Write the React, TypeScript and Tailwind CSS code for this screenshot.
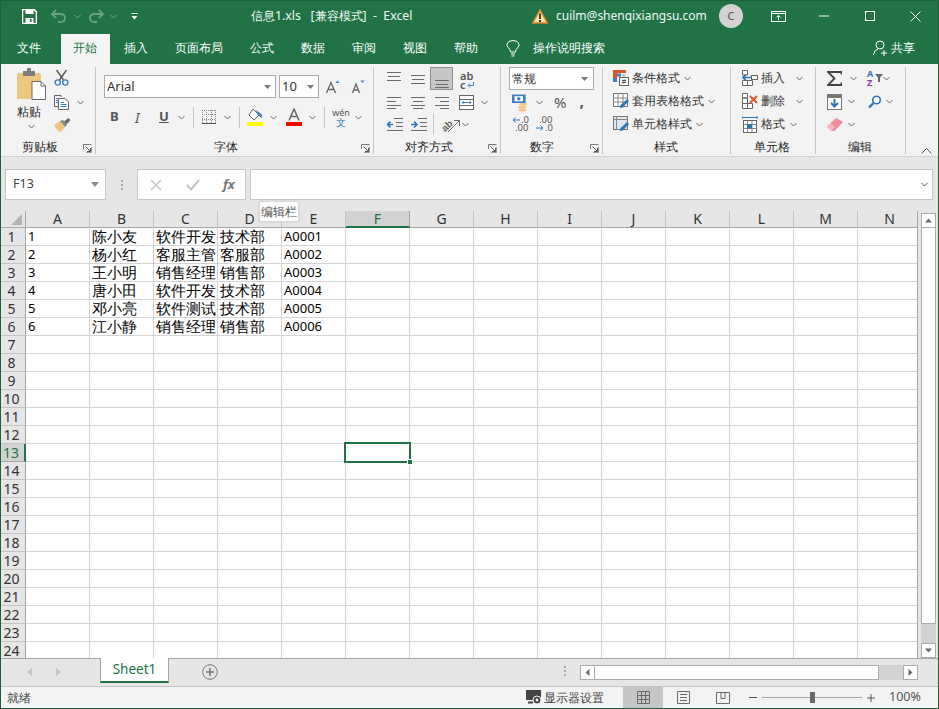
import React from "react";

const UI = "font-['Noto_Sans','Noto_Sans_CJK_SC',sans-serif]";

function Chev({ c = "#6a6a6a", cls = "" }: { c?: string; cls?: string }) {
  return (
    <svg width="7" height="5" viewBox="0 0 7 5" className={`shrink-0 ${cls}`}>
      <path d="M0.5 1 L3.5 4 L6.5 1" fill="none" stroke={c} strokeWidth="1" />
    </svg>
  );
}
function Lines({ w = 14, ys, xs }: { w?: number; ys: number[]; xs?: [number, number][] }) {
  return (
    <svg width={w} height="16" viewBox={`0 0 ${w} 16`}>
      {ys.map((y, i) => (
        <path key={i} d={`M${xs ? xs[i][0] : 0} ${y}.5 H${xs ? xs[i][1] : w}`} stroke="#6b6b6b" />
      ))}
    </svg>
  );
}
function Launcher() {
  return (
    <svg width="9" height="9" viewBox="0 0 9 9">
      <path d="M0.5 5 V0.5 H8.5" fill="none" stroke="#7a7a7a" />
      <path d="M2.5 2.5 L7.5 7.5 M4 7.5 H7.5 V4" fill="none" stroke="#555" />
      <path d="M8.5 3 V8.5 H3" fill="none" stroke="#999" />
    </svg>
  );
}
function Group({ w, label, children, launcher, lx }: { w: string; label: string; children: React.ReactNode; launcher?: boolean; lx?: string }) {
  return (
    <div className={`${w} shrink-0 h-[87px] mt-[3px] border-r border-[#c6c6c6] flex flex-col relative`}>
      <div className="flex-1 min-h-0">{children}</div>
      <div className={`h-[15px] text-[12px] leading-[15px] text-center text-[#262626] ${lx ?? ""}`}>{label}</div>
      {launcher && (
        <div className="absolute right-[2px] bottom-0 h-[10px] w-[10px]">
          <Launcher />
        </div>
      )}
    </div>
  );
}
function Sep({ h = "h-[21px]" }: { h?: string }) {
  return <div className={`w-px ${h} bg-[#c6c6c6] shrink-0`} />;
}

const Paste = () => (
  <svg width="29" height="36" viewBox="0 0 29 36">
    <rect x="0" y="5" width="24" height="26" rx="1.5" fill="#efc67f" />
    <rect x="6" y="3" width="12" height="5" fill="#7d7d7d" />
    <rect x="10" y="0" width="4" height="4" fill="#7d7d7d" />
    <path d="M15 13.5 H24 L28.5 18 V31.5 H15 Z" fill="#fff" stroke="#6a6a6a" />
    <path d="M24 13.5 V18 H28.5" fill="none" stroke="#6a6a6a" />
  </svg>
);
const Scissors = () => (
  <svg width="15" height="16" viewBox="0 0 15 16">
    <path d="M2.5 0 L9.5 10 M12.5 0 L5.5 10" stroke="#555" strokeWidth="1.4" fill="none" />
    <circle cx="3.7" cy="12.5" r="2.6" fill="none" stroke="#3f7fc1" strokeWidth="1.4" />
    <circle cx="11.3" cy="12.5" r="2.6" fill="none" stroke="#3f7fc1" strokeWidth="1.4" />
  </svg>
);
const Copy = () => (
  <svg width="16" height="15" viewBox="0 0 16 15">
    <path d="M0.5 0.5 H7 V2 M0.5 0.5 V11.5 H4" fill="none" stroke="#666" />
    <path d="M4.5 3.5 H11 L14.5 7 V14.5 H4.5 Z" fill="#fff" stroke="#666" />
    <path d="M6.5 7.5 H10 M6.5 9.5 H12.5 M6.5 11.5 H12.5" stroke="#3f7fc1" />
    <path d="M2 3.5 H4 M2 5.5 H4 M2 7.5 H4" stroke="#3f7fc1" />
  </svg>
);
const Brush = () => (
  <svg width="17" height="15" viewBox="0 0 17 15">
    <path d="M0 7 L6 3 L11 9 L7 14 Q3 13 0 7Z" fill="#efc67f" />
    <path d="M6 3 L11 9 L13 7 L9 2Z" fill="#8a8a8a" />
    <path d="M10 3.5 L14.5 0 L16.5 2 L12.5 6.5Z" fill="#6a6a6a" />
  </svg>
);
const GrowA = ({ up }: { up: boolean }) => (
  <svg width="14" height="14" viewBox="0 0 14 14">
    <path d={up ? "M9.5 3 L11.5 0.5 L13.5 3Z" : "M9.5 0.5 H13.5 L11.5 3Z"} fill="#3f7fc1" />
    <path d={up ? "M0.5 13 L5 2.5 L9.5 13 M2 9.5 H8" : "M1.5 13 L5 4 L8.5 13 M3 10 H7.5"} fill="none" stroke="#666" strokeWidth="1.3" />
  </svg>
);
const Borders = () => (
  <svg width="14" height="14" viewBox="0 0 14 14">
    <path d="M0.5 0 V13 M4.5 0 V13 M9.5 0 V13 M13.5 0 V13 M0 0.5 H14 M0 4.5 H14 M0 9.5 H14" fill="none" stroke="#8a8a8a" strokeDasharray="1 1" />
    <path d="M0 13.5 H14" stroke="#555" />
  </svg>
);
const Fill = () => (
  <svg width="16" height="18" viewBox="0 0 16 18">
    <path d="M6 1 L12 7 L7 12 L2 7Z" fill="#fff" stroke="#666" />
    <path d="M9 2 L13 5 Q16 7 15 10 Q12 8 10 6Z" fill="#3f7fc1" />
    <rect x="0" y="14" width="16" height="4" fill="#ffff00" />
  </svg>
);
const FontColor = () => (
  <svg width="16" height="18" viewBox="0 0 16 18">
    <path d="M3 12.5 L8 1 L13 12.5 M5 8.5 H11" fill="none" stroke="#666" strokeWidth="1.5" />
    <rect x="0" y="14" width="16" height="4" fill="#ff0000" />
  </svg>
);
const Wrap = () => (
  <div className="relative w-[18px] h-[22px] text-[11px] leading-[9px] text-[#555] font-semibold pt-[3px] font-['Liberation_Sans',sans-serif]">
    <div>ab</div>
    <div className="flex items-end">c<svg width="8" height="7" viewBox="0 0 8 7" className="ml-[1px]"><path d="M6.5 0 V3.5 H1.5 M3 1.5 L1 3.5 L3 5.5" fill="none" stroke="#3f7fc1" /></svg></div>
  </div>
);
const Merge = () => (
  <svg width="15" height="15" viewBox="0 0 15 15">
    <rect x="0.5" y="0.5" width="14" height="14" fill="#fff" stroke="#666" />
    <path d="M0.5 4.5 H14.5 M0.5 10.5 H14.5" stroke="#666" />
    <path d="M3 7.5 H12 M4.5 6 L3 7.5 L4.5 9 M10.5 6 L12 7.5 L10.5 9" fill="none" stroke="#3f7fc1" />
  </svg>
);
const Indent = ({ rev }: { rev?: boolean }) => (
  <svg width="16" height="13" viewBox="0 0 16 13">
    <path d="M7 0.5 H16 M9 4.5 H16 M9 8.5 H16 M0 12.5 H16" stroke="#6b6b6b" />
    <path d={rev ? "M0 6.5 H6 M3.5 3.5 L0.5 6.5 L3.5 9.5" : "M0 6.5 H6 M3 3.5 L6 6.5 L3 9.5"} fill="none" stroke="#2f75b5" strokeWidth="1.6" />
  </svg>
);
const Orient = () => (
  <svg width="20" height="17" viewBox="0 0 20 17">
    <text x="1" y="14" fontSize="10" fontWeight="700" fill="#666" fontFamily="Liberation Sans" transform="rotate(-42 6 10)">ab</text>
    <path d="M8 16 L19 5 M14 4.5 H19.5 V10" fill="none" stroke="#666" />
  </svg>
);
const Currency = () => (
  <svg width="17" height="18" viewBox="0 0 20 20">
    <rect x="0" y="0" width="16" height="10" fill="#3f7fc1" />
    <rect x="3" y="2" width="10" height="6" fill="#fff" />
    <circle cx="8" cy="5" r="2" fill="#3f7fc1" />
    <ellipse cx="13" cy="11.5" rx="5" ry="1.6" fill="#efc67f" />
    <ellipse cx="12" cy="15" rx="5" ry="1.6" fill="#efc67f" />
    <ellipse cx="12" cy="18.3" rx="5" ry="1.6" fill="#efc67f" />
  </svg>
);
const DecMore = () => (
  <div className="relative w-[16px] h-[16px] text-[9.5px] leading-[8px] text-[#555] font-['Liberation_Sans',sans-serif]">
    <svg width="8" height="6" viewBox="0 0 8 6" className="absolute left-0 top-[1px]"><path d="M8 3 H1 M3.5 0.5 L1 3 L3.5 5.5" fill="none" stroke="#2f75b5" /></svg>
    <span className="absolute left-[9px] top-0">.0</span>
    <span className="absolute left-[3px] top-[8px]">.00</span>
  </div>
);
const DecLess = () => (
  <div className="relative w-[16px] h-[16px] text-[9.5px] leading-[8px] text-[#555] font-['Liberation_Sans',sans-serif]">
    <span className="absolute left-[3px] top-0">.00</span>
    <svg width="8" height="6" viewBox="0 0 8 6" className="absolute left-0 top-[9px]"><path d="M0 3 H7 M4.5 0.5 L7 3 L4.5 5.5" fill="none" stroke="#2f75b5" /></svg>
    <span className="absolute left-[9px] top-[8px]">.0</span>
  </div>
);
const CondFmt = () => (
  <svg width="16" height="16" viewBox="0 0 16 16">
    <rect x="0" y="0" width="13" height="3" fill="#d9592a" />
    <rect x="0" y="0" width="4" height="12" fill="#d9592a" />
    <rect x="4" y="3.5" width="4" height="3" fill="#3f7fc1" />
    <rect x="0" y="8" width="4" height="4" fill="#3f7fc1" />
    <rect x="9" y="4" width="3.5" height="3" fill="#c9c9c9" />
    <rect x="6.5" y="7.5" width="9" height="8" fill="#fff" stroke="#666" />
    <path d="M9 10.5 H13 M9 12.5 H13 M12 9.5 L10 13.5" stroke="#555" />
  </svg>
);
const TableFmt = ({ cell }: { cell?: boolean }) => (
  <svg width="17" height="16" viewBox="0 0 17 16">
    <rect x="0.5" y="0.5" width="14" height="13" fill={cell ? "#dce6f1" : "#fff"} stroke="#777" />
    {!cell && <path d="M5 0.5 V13.5 M10 0.5 V13.5 M0.5 5 H14.5 M0.5 9 H14.5" stroke="#888" />}
    {cell && <path d="M0.5 3.5 H14.5 M3.5 0.5 V13.5" stroke="#888" />}
    <path d="M7 15 Q7 11 10 10 L14 6 L16 8 L12 12 Q11 15 7 15Z" fill="#2f75b5" />
  </svg>
);
const InsertI = () => (
  <svg width="16" height="16" viewBox="0 0 16 16">
    <path d="M0.5 0.5 H5.5 V5 H0.5Z M0.5 10.5 H5.5 V15.5 H0.5Z M5.5 10.5 H10.5 V15.5 H5.5Z" fill="#fff" stroke="#666" />
    <rect x="9.5" y="5.5" width="6" height="4" fill="#fff" stroke="#666" />
    <path d="M1 7.5 H9 M4 4.5 L1 7.5 L4 10.5" fill="none" stroke="#2f75b5" strokeWidth="1.6" />
  </svg>
);
const DeleteI = () => (
  <svg width="16" height="16" viewBox="0 0 16 16">
    <path d="M0.5 0.5 H5.5 V5 H0.5Z M0.5 5 H5.5 V10.5 H0.5Z M0.5 10.5 H5.5 V15.5 H0.5Z M5.5 10.5 H10.5 V15.5 H5.5Z" fill="#fff" stroke="#666" />
    <path d="M8 3 L15 10 M15 3 L8 10" stroke="#d9592a" strokeWidth="2" />
  </svg>
);
const FormatI = () => (
  <svg width="16" height="17" viewBox="0 0 16 17">
    <path d="M0 1.5 H15 M0 0 V3 M15 0 V3" stroke="#2f75b5" />
    <rect x="1.5" y="4.5" width="13" height="12" fill="#fff" stroke="#666" />
    <path d="M5.5 4.5 V16.5 M10 4.5 V16.5 M1.5 8.5 H14.5 M1.5 12.5 H14.5" stroke="#888" />
    <rect x="5" y="8" width="5" height="4.5" fill="#2f75b5" />
  </svg>
);
const Sigma = () => (
  <svg width="15" height="15" viewBox="0 0 15 15">
    <path d="M14.5 3.5 V1 H1 L7.5 7.5 L1 14 H14.5 V11.5" fill="none" stroke="#444" strokeWidth="1.8" />
  </svg>
);
const Sort = () => (
  <div className="relative w-[15px] h-[17px] text-[9px] leading-[8px] font-bold font-['Liberation_Sans',sans-serif]">
    <span className="absolute left-0 top-0 text-[#2f75b5]">A</span>
    <span className="absolute left-0 top-[9px] text-[#7f3f98]">Z</span>
    <svg width="8" height="8" viewBox="0 0 8 8" className="absolute left-[8px] top-[4px]"><path d="M0 0 H8 L5 3.5 V8 H3 V3.5Z" fill="#666" /></svg>
  </div>
);
const FillDown = () => (
  <svg width="15" height="16" viewBox="0 0 15 16">
    <rect x="0.5" y="0.5" width="14" height="15" fill="#fff" stroke="#777" />
    <rect x="1" y="1" width="13" height="3" fill="#777" />
    <path d="M7.5 5 V12.5 M4 9 L7.5 12.5 L11 9" fill="none" stroke="#2f75b5" strokeWidth="2" />
  </svg>
);
const Find = () => (
  <svg width="14" height="14" viewBox="0 0 14 14">
    <circle cx="8.5" cy="5" r="3.8" fill="#fff" stroke="#2f75b5" strokeWidth="1.6" />
    <path d="M5.5 8 L1 12.5" stroke="#2f75b5" strokeWidth="2.4" />
  </svg>
);
const Eraser = () => (
  <svg width="16" height="13" viewBox="0 0 16 13">
    <path d="M0 8.5 L9 0 L16 4 L7.5 13 H4Z" fill="#ee8a9a" />
    <path d="M0 8.5 L3.5 5 L8 9 L5 13 H4Z" fill="#f5b5bf" />
  </svg>
);

function Ribbon() {
  return (
    <div className="h-[93px] bg-[#f3f3f3] border-b border-[#d2d2d2] flex shrink-0 text-[#333] relative">
      <Group w="w-[95px]" label="剪贴板" launcher lx="pr-[16px]">
        <div className="flex pl-[16px] pt-[1px]">
          <div className="w-[37px] flex flex-col items-start">
            <Paste />
            <div className="text-[12px] leading-[16px] text-[#262626]">粘贴</div>
            <Chev cls="ml-[11px] mt-[4px]" />
          </div>
          <div className="flex flex-col gap-[8px] pt-[2px]">
            <Scissors />
            <div className="flex items-center gap-[7px] h-[16px]"><Copy /><Chev /></div>
            <Brush />
          </div>
        </div>
      </Group>

      <Group w="w-[278px]" label="字体" launcher lx="pr-[18px]">
        <div className="pl-[8px] pt-[8px]">
          <div className="flex items-center h-[23px]">
            <div className="w-[172px] h-[23px] bg-white border border-[#ababab] flex items-center justify-between pl-[2px] pr-[4px] text-[13px] text-[#333] font-['Noto_Sans',sans-serif]">
              Arial<svg width="7" height="4" viewBox="0 0 7 4"><path d="M0 0 H7 L3.5 4Z" fill="#777" /></svg>
            </div>
            <div className="w-[40px] h-[23px] ml-[3px] bg-white border border-[#ababab] flex items-center justify-between pl-[2px] pr-[4px] text-[13px] text-[#333] font-['Noto_Sans',sans-serif]">
              10<svg width="7" height="4" viewBox="0 0 7 4"><path d="M0 0 H7 L3.5 4Z" fill="#777" /></svg>
            </div>
            <div className="ml-[7px] flex gap-[11px]"><GrowA up /><GrowA up={false} /></div>
          </div>
          <div className="flex items-center h-[22px] mt-[8px] font-['Liberation_Sans',sans-serif]">
            <span className="w-[24px] shrink-0 text-[13px] font-bold text-[#555] pl-[6px]">B</span>
            <span className="w-[24px] shrink-0 text-[14px] italic text-[#555] pl-[7px] font-['Liberation_Serif',serif]">I</span>
            <span className="w-[20px] shrink-0 text-[13px] font-bold text-[#555] pl-[7px]"><span className="underline">U</span></span>
            <Chev cls="ml-[6px]" />
            <div className="ml-[8px]"><Sep /></div>
            <div className="ml-[8px] flex items-center"><Borders /></div>
            <Chev cls="ml-[8px]" />
            <div className="ml-[8px]"><Sep /></div>
            <div className="ml-[7px]"><Fill /></div>
            <Chev cls="ml-[7px]" />
            <div className="ml-[9px]"><FontColor /></div>
            <Chev cls="ml-[7px]" />
            <div className="ml-[8px]"><Sep /></div>
            <div className="ml-[7px] w-[18px] flex flex-col items-center leading-[10px]">
              <span className="text-[9px] text-[#555] leading-[9px]">wén</span>
              <span className="text-[10px] text-[#2f75b5] leading-[10px]">文</span>
            </div>
            <Chev cls="ml-[5px]" />
          </div>
        </div>
      </Group>

      <Group w="w-[127px]" label="对齐方式" launcher lx="pr-[16px]">
        <div className="pl-[13px]">
          <div className="flex items-center h-[23px]">
            <div className="w-[14px]"><Lines ys={[1, 5, 9]} xs={[[0,14],[1,13],[0,14]]} /></div>
            <div className="w-[14px] ml-[10px]"><Lines ys={[4, 8, 12]} xs={[[0,14],[1,13],[0,14]]} /></div>
            <div className="w-[23px] h-[23px] ml-[5px] bg-[#c6c6c6] border border-[#8f8f8f] flex items-center justify-center pt-[4px]"><Lines ys={[7, 11, 14]} xs={[[0,14],[1,13],[0,14]]} /></div>
            <div className="ml-[7px]"><Wrap /></div>
          </div>
          <div className="flex items-center h-[20px] mt-[2px]">
            <div className="w-[14px]"><Lines ys={[3, 7, 11, 14]} xs={[[0,14],[0,9],[0,14],[0,9]]} /></div>
            <div className="w-[14px] ml-[10px]"><Lines ys={[3, 7, 11, 14]} xs={[[0,14],[2,12],[0,14],[2,12]]} /></div>
            <div className="w-[14px] ml-[10px]"><Lines ys={[3, 7, 11, 14]} xs={[[0,14],[5,14],[0,14],[5,14]]} /></div>
            <div className="ml-[10px]"><Merge /></div>
            <Chev cls="ml-[7px]" />
          </div>
          <div className="flex items-center h-[22px] mt-[1px]">
            <Indent rev />
            <div className="ml-[8px]"><Indent /></div>
            <div className="ml-[6px]"><Sep h="h-[22px]" /></div>
            <div className="ml-[6px]"><Orient /></div>
            <Chev cls="ml-[2px]" />
          </div>
        </div>
      </Group>

      <Group w="w-[102px]" label="数字" launcher lx="pr-[20px]">
        <div className="pl-[8px]">
          <div className="w-[85px] h-[23px] bg-white border border-[#ababab] flex items-center justify-between pl-[2px] pr-[5px] text-[12px] text-[#333]">
            常规<svg width="7" height="4" viewBox="0 0 7 4"><path d="M0 0 H7 L3.5 4Z" fill="#777" /></svg>
          </div>
          <div className="flex items-center h-[21px] mt-[2px] pl-[3px]">
            <Currency />
            <Chev cls="ml-[7px]" />
            <span className="ml-[11px] text-[15px] text-[#555] font-['Liberation_Sans',sans-serif]">%</span>
            <span className="ml-[13px] text-[16px] font-bold leading-[12px] pb-[4px] text-[#555] font-['Liberation_Serif',serif]">,</span>
          </div>
          <div className="flex items-center h-[20px] pt-[1px] pl-[3px] gap-[8px]">
            <DecMore /><DecLess />
          </div>
        </div>
      </Group>

      <Group w="w-[128px]" label="样式" lx="pr-[2px]">
        <div className="pl-[10px] pt-[2px] flex flex-col gap-[5px] text-[12px] leading-[18px] text-[#333]">
          {[
            [<CondFmt key="a" />, "条件格式"],
            [<TableFmt key="b" />, "套用表格格式"],
            [<TableFmt key="c" cell />, "单元格样式"],
          ].map(([ic, t], i) => (
            <div key={i} className="flex items-center h-[18px]">
              <div className="w-[19px]">{ic}</div>
              <span>{t}</span>
              <Chev cls="ml-[4px]" />
            </div>
          ))}
        </div>
      </Group>

      <Group w="w-[85px]" label="单元格" lx="pr-[2px]">
        <div className="pl-[11px] pt-[2px] flex flex-col gap-[5px] text-[12px] leading-[18px] text-[#333]">
          <div className="flex items-center h-[18px]"><div className="w-[19px]"><InsertI /></div><span>插入</span><Chev cls="ml-[11px]" /></div>
          <div className="flex items-center h-[18px]"><div className="w-[19px]"><DeleteI /></div><span>删除</span><Chev cls="ml-[11px]" /></div>
          <div className="flex items-center h-[18px]"><div className="w-[19px]"><FormatI /></div><span>格式</span><Chev cls="ml-[5px]" /></div>
        </div>
      </Group>

      <Group w="w-[90px]" label="编辑" lx="pr-[2px]">
        <div className="pl-[11px] flex flex-col gap-[6px] pt-[3px]">
          <div className="flex items-center h-[17px]"><Sigma /><Chev cls="ml-[8px]" /><div className="ml-[10px]"><Sort /></div><Chev cls="ml-[1px]" /></div>
          <div className="flex items-center h-[17px]"><FillDown /><Chev cls="ml-[6px]" /><div className="ml-[13px]"><Find /></div><Chev cls="ml-[4px]" /></div>
          <div className="flex items-center h-[17px]"><Eraser /><Chev cls="ml-[5px]" /></div>
        </div>
      </Group>

      <div className="flex-1 relative">
        <svg width="11" height="6" viewBox="0 0 11 6" className="absolute left-[15px] bottom-[2px]"><path d="M0.5 5.5 L5.5 0.5 L10.5 5.5" fill="none" stroke="#555" /></svg>
      </div>
    </div>
  );
}

const COLS = ["A", "B", "C", "D", "E", "F", "G", "H", "I", "J", "K", "L", "M", "N"];
const DATA: string[][] = [
  ["1", "陈小友", "软件开发", "技术部", "A0001"],
  ["2", "杨小红", "客服主管", "客服部", "A0002"],
  ["3", "王小明", "销售经理", "销售部", "A0003"],
  ["4", "唐小田", "软件开发", "技术部", "A0004"],
  ["5", "邓小亮", "软件测试", "技术部", "A0005"],
  ["6", "江小静", "销售经理", "销售部", "A0006"],
];

function Sheet() {
  const rows = Array.from({ length: 24 }, (_, i) => i + 1);
  return (
    <div className="w-[916px] shrink-0 overflow-hidden bg-white h-[447px]">
      <div className="flex h-[17px]">
        <div className="w-[25px] shrink-0 h-[17px] bg-[#e6e6e6] border-r border-b border-[#a6a6a6] flex items-end justify-end pr-[3px] pb-[2px]">
          <svg width="11" height="11" viewBox="0 0 11 11"><path d="M11 0 V11 H0Z" fill="#b4b4b4" /></svg>
        </div>
        {COLS.map((c) =>
          c === "F" ? (
            <div key={c} className="w-[64px] shrink-0 h-[17px] bg-[#d2d2d2] border-b-2 border-[#217346] text-[#217346] text-[14px] leading-[15px] text-center border-r border-r-[#a6a6a6]">{c}</div>
          ) : (
            <div key={c} className="w-[64px] shrink-0 h-[17px] bg-[#e6e6e6] border-b border-[#a6a6a6] border-r border-r-[#c4c4c4] text-[#333] text-[14px] leading-[16px] text-center">{c}</div>
          )
        )}
      </div>
      {rows.map((r) => (
        <div key={r} className="flex h-[18px]">
          {r === 13 ? (
            <div className="w-[25px] shrink-0 bg-[#d2d2d2] border-r-2 border-[#217346] border-b border-b-[#a6a6a6] text-[#217346] text-[14px] leading-[18px] text-center pr-[3px]">{r}</div>
          ) : (
            <div className="w-[25px] shrink-0 bg-[#e6e6e6] border-r border-[#a6a6a6] border-b border-b-[#c4c4c4] text-[#333] text-[14px] leading-[18px] text-center pr-[3px]">{r}</div>
          )}
          {COLS.map((c, ci) => {
            const v = DATA[r - 1]?.[ci];
            const latin = ci === 0 || ci === 4;
            return (
              <div
                key={c}
                className={`w-[64px] shrink-0 border-r border-b border-[#d4d4d4] relative whitespace-nowrap overflow-visible text-black leading-[17px] pl-[2px] ${latin ? "text-[13px] font-['Liberation_Sans',sans-serif]" : "text-[14.67px] font-['Noto_Sans_CJK_SC',sans-serif]"}`}
              >
                {v}
                {r === 13 && c === "F" && (
                  <div className="absolute left-[-2px] top-[-2px] w-[67px] h-[21px] border-2 border-[#217346] z-10">
                    <div className="absolute right-[-4px] bottom-[-4px] w-[6px] h-[6px] bg-[#217346] border border-white" />
                  </div>
                )}
              </div>
            );
          })}
        </div>
      ))}
    </div>
  );
}

function SbBtn({ d, cls = "" }: { d: string; cls?: string }) {
  return (
    <div className={`bg-white border border-[#ababab] flex items-center justify-center shrink-0 ${cls}`}>
      <svg width="9" height="9" viewBox="0 0 9 9"><path d={d} fill="#6a6a6a" /></svg>
    </div>
  );
}

export default function App() {
  return (
    <div className={`w-[939px] h-[709px] relative overflow-hidden flex flex-col bg-[#e6e6e6] border border-[#1b6239] ${UI}`}>
      {/* Title bar */}
      <div className="h-[33px] bg-[#217346] flex items-center text-white shrink-0 relative pb-[3px]">
        <svg width="15" height="15" viewBox="0 0 15 15" className="ml-[21px] shrink-0">
          <path d="M1 0.5 H12 L14.5 3 V14.5 H0.5 V0.5Z" fill="none" stroke="#fff" strokeWidth="1.6" />
          <rect x="3.5" y="1" width="8" height="4" fill="#fff" />
          <rect x="3.5" y="9" width="8" height="5" fill="#fff" />
          <rect x="8" y="10" width="1.6" height="3" fill="#217346" />
        </svg>
        <svg width="15" height="14" viewBox="0 0 15 14" className="ml-[14px] opacity-40 shrink-0">
          <path d="M5 1 L1 5 L5 9 M1 5 H9 Q14 5 14 9 Q14 13 9 13 H7" fill="none" stroke="#d8e8de" strokeWidth="1.8" />
        </svg>
        <div className="ml-[8px] opacity-50"><Chev c="#cfe3d7" /></div>
        <svg width="15" height="14" viewBox="0 0 15 14" className="ml-[8px] opacity-40 shrink-0">
          <path d="M10 1 L14 5 L10 9 M14 5 H6 Q1 5 1 9 Q1 13 6 13 H8" fill="none" stroke="#d8e8de" strokeWidth="1.8" />
        </svg>
        <div className="ml-[6px] opacity-50"><Chev c="#cfe3d7" /></div>
        <svg width="7" height="7" viewBox="0 0 7 7" className="ml-[14px] shrink-0"><path d="M0.5 0.5 H6.5" stroke="#fff" /><path d="M0.5 3 H6.5 L3.5 6.5Z" fill="#fff" /></svg>
        <span className="ml-[113px] w-[163px] shrink-0 text-[12.3px] whitespace-pre text-[#f2f7f4]">信息1.xls   [兼容模式]  -  Excel</span>
        <svg width="16" height="15" viewBox="0 0 16 15" className="ml-[118px] shrink-0">
          <path d="M8 0.8 L15.3 14 H0.7Z" fill="#f7e3a8" stroke="#d9822b" strokeWidth="1.4" />
          <path d="M8 4.5 V10" stroke="#333" strokeWidth="1.8" />
          <rect x="7" y="11" width="2" height="2" fill="#333" />
        </svg>
        <span className="ml-[8px] w-[152px] shrink-0 text-[12px] whitespace-nowrap text-[#f2f7f4]">cuilm@shenqixiangsu.com</span>
        <div className="ml-[11px] w-[24px] h-[24px] shrink-0 rounded-full bg-[#d2d2d2] flex items-center justify-center text-[11px] text-[#555]">C</div>
        <svg width="15" height="11" viewBox="0 0 15 11" className="ml-[28px] shrink-0">
          <rect x="0.5" y="0.5" width="14" height="10" fill="none" stroke="#fff" />
          <path d="M0.5 2.5 H14.5" stroke="#fff" />
          <path d="M7.5 9 V4.5 M5.3 6.5 L7.5 4.3 L9.7 6.5" fill="none" stroke="#fff" />
        </svg>
        <svg width="10" height="2" viewBox="0 0 10 2" className="ml-[33px] shrink-0"><path d="M0 1 H10" stroke="#fff" /></svg>
        <svg width="10" height="10" viewBox="0 0 10 10" className="ml-[36px] shrink-0"><rect x="0.5" y="0.5" width="9" height="9" fill="none" stroke="#fff" /></svg>
        <svg width="11" height="11" viewBox="0 0 11 11" className="ml-[35px] shrink-0"><path d="M0.5 0.5 L10.5 10.5 M10.5 0.5 L0.5 10.5" stroke="#fff" /></svg>
      </div>

      {/* Tabs */}
      <div className="h-[30px] bg-[#217346] flex items-center text-white text-[12px] shrink-0">
        <div className="pl-[16px] pr-[20px] leading-[28px] h-[30px]">文件</div>
        <div className="pl-[12px] pr-[13px] leading-[28px] h-[30px] bg-[#f3f3f3] text-[#217346]">开始</div>
        {["插入", "页面布局", "公式", "数据", "审阅", "视图", "帮助"].map((t) => (
          <div key={t} className="pl-[14px] pr-[13px] leading-[28px] h-[30px]">{t}</div>
        ))}
        <svg width="14" height="17" viewBox="0 0 14 17" className="ml-[15px] mb-[2px] shrink-0">
          <path d="M4.5 12 Q4.5 9.5 2.5 8 Q0.5 6 1 4 Q2 0.5 7 0.5 Q12 0.5 13 4 Q13.5 6 11.5 8 Q9.5 9.5 9.5 12Z" fill="none" stroke="#fff" />
          <path d="M5 14 H9 M5.5 16 H8.5" stroke="#fff" />
        </svg>
        <span className="ml-[13px] leading-[28px] h-[30px]">操作说明搜索</span>
        <svg width="15" height="16" viewBox="0 0 15 16" className="ml-[268px] mb-[2px] shrink-0">
          <circle cx="7" cy="5" r="4" fill="none" stroke="#fff" />
          <path d="M0.5 15 Q1 10 5 9" fill="none" stroke="#fff" />
          <path d="M11 10 V16 M8 13 H14" stroke="#fff" />
        </svg>
        <span className="ml-[3px] leading-[28px] h-[30px]">共享</span>
      </div>

      <Ribbon />

      {/* Formula bar */}
      <div className="h-[54px] shrink-0 bg-[#e6e6e6] flex pl-[4px] pt-[12px] pr-[5px] text-[#555] relative">
        <div className="w-[101px] h-[31px] bg-white border border-[#c6c6c6] flex items-center justify-between pl-[7px] pr-[6px] text-[12.5px] text-[#444]">
          F13<svg width="8" height="5" viewBox="0 0 8 5"><path d="M0 0 H8 L4 5Z" fill="#8a8a8a" /></svg>
        </div>
        <div className="w-[31px] h-[31px] flex flex-col items-center justify-center gap-[2px]">
          <div className="w-[2px] h-[2px] bg-[#aaa]" /><div className="w-[2px] h-[2px] bg-[#aaa]" /><div className="w-[2px] h-[2px] bg-[#aaa]" />
        </div>
        <div className="w-[109px] h-[31px] bg-white border border-[#c6c6c6] flex items-center pl-[12px]">
          <svg width="12" height="12" viewBox="0 0 12 12"><path d="M1 1 L11 11 M11 1 L1 11" stroke="#c4c4c4" strokeWidth="1.4" /></svg>
          <svg width="14" height="12" viewBox="0 0 14 12" className="ml-[24px]"><path d="M1 6 L5 10.5 L13 1" fill="none" stroke="#c4c4c4" strokeWidth="2" /></svg>
          <span className="ml-[23px] text-[13px] italic font-bold text-[#777] font-['Liberation_Serif',serif]">fx</span>
        </div>
        <div className="ml-[4px] flex-1 h-[31px] bg-white border border-[#c6c6c6] flex items-center justify-end pr-[4px]">
          <Chev c="#555" />
        </div>
        <div className="absolute left-[258px] top-[44px] h-[21px] w-[40px] bg-white border border-[#d8d8d8] text-[12px] leading-[19px] text-center text-[#555] z-20 whitespace-nowrap rounded-[2px] shadow-[0_0_2px_rgba(0,0,0,0.15)]">编辑栏</div>
      </div>

      {/* Grid + vertical scrollbar */}
      <div className="flex h-[447px] shrink-0 font-['Noto_Sans',sans-serif]">
        <Sheet />
        <div className="w-[21px] shrink-0 h-[447px] bg-[#e6e6e6] border-l border-[#a6a6a6] flex flex-col pl-[3px] pt-[2px]">
          <SbBtn d="M4.5 2.5 L8 6.5 H1Z" cls="w-[15px] h-[15px]" />
          <div className="w-[15px] h-[396px] bg-white border border-[#ababab] border-t-0" />
          <div className="w-[15px] flex-1 bg-[#d2d2d2]" />
          <SbBtn d="M1 2.5 H8 L4.5 6.5Z" cls="w-[15px] h-[15px]" />
        </div>
      </div>

      {/* Sheet tabs */}
      <div className="h-[29px] shrink-0 bg-[#e6e6e6] border-t border-[#a6a6a6] flex relative border-b border-b-[#c6c6c6]">
        <svg width="6" height="8" viewBox="0 0 6 8" className="ml-[26px] mt-[9px]"><path d="M5 0 V8 L0 4Z" fill="#c4c4c4" /></svg>
        <svg width="6" height="8" viewBox="0 0 6 8" className="ml-[23px] mt-[9px]"><path d="M0 0 V8 L5 4Z" fill="#c4c4c4" /></svg>
        <div className="ml-[38px] mt-[-1px] w-[69px] h-[25px] bg-white border-x border-[#a6a6a6] border-b-2 border-b-[#217346] text-[#217346] text-[13.5px] leading-[23px] text-center">Sheet1</div>
        <svg width="16" height="16" viewBox="0 0 16 16" className="ml-[33px] mt-[5px]">
          <circle cx="8" cy="8" r="7.3" fill="none" stroke="#777" />
          <path d="M8 4 V12 M4 8 H12" stroke="#777" strokeWidth="1.6" />
        </svg>
        <div className="ml-[346px] mt-[7px] flex flex-col gap-[2px] w-[2px]">
          <div className="w-[2px] h-[2px] bg-[#aaa]" /><div className="w-[2px] h-[2px] bg-[#aaa]" /><div className="w-[2px] h-[2px] bg-[#aaa]" />
        </div>
        <div className="ml-[14px] mt-[6px] flex h-[15px] w-[338px]">
          <SbBtn d="M6.5 1 V8 L2.5 4.5Z" cls="w-[15px] h-[15px]" />
          <div className="w-[284px] bg-white border border-[#ababab] border-l-0" />
          <div className="flex-1 bg-[#d2d2d2]" />
          <SbBtn d="M2.5 1 V8 L6.5 4.5Z" cls="w-[15px] h-[15px]" />
        </div>
      </div>

      {/* Status bar */}
      <div className="flex-1 bg-[#f3f3f3] flex items-center text-[12px] text-[#444]">
        <span className="ml-[6px]">就绪</span>
        <svg width="16" height="15" viewBox="0 0 16 15" className="ml-[495px]">
          <rect x="0" y="0" width="15" height="10" fill="#444" />
          <circle cx="11" cy="10" r="4" fill="#444" stroke="#f3f3f3" />
          <circle cx="11" cy="10" r="1.4" fill="#f3f3f3" />
          <path d="M2 12.5 H7" stroke="#444" strokeWidth="2" />
        </svg>
        <span className="ml-[2px] w-[60px]">显示器设置</span>
        <div className="ml-[19px] w-[40px] h-[21px] bg-[#c6c6c6] flex items-center justify-center">
          <svg width="13" height="13" viewBox="0 0 13 13"><path d="M0.5 0.5 H12.5 V12.5 H0.5Z M4.5 0.5 V12.5 M8.5 0.5 V12.5 M0.5 4.5 H12.5 M0.5 8.5 H12.5" fill="none" stroke="#6a6a6a" /></svg>
        </div>
        <div className="w-[40px] flex justify-center">
          <svg width="13" height="13" viewBox="0 0 13 13"><path d="M0.5 0.5 H12.5 V12.5 H0.5Z M3 3.5 H10 M3 6.5 H10 M3 9.5 H10" fill="none" stroke="#6a6a6a" /></svg>
        </div>
        <div className="w-[40px] flex justify-center">
          <svg width="14" height="12" viewBox="0 0 14 12"><path d="M0.5 0.5 H13.5 V11.5 H0.5Z M5 0.5 V6.5 H9 V0.5" fill="none" stroke="#6a6a6a" /></svg>
        </div>
        <div className="ml-[6px] w-[8px] h-px bg-[#555]" />
        <div className="ml-[5px] w-[100px] h-px bg-[#a6a6a6] relative">
          <div className="absolute left-[48px] top-[-5px] w-[5px] h-[11px] bg-[#6a6a6a]" />
        </div>
        <svg width="8" height="8" viewBox="0 0 8 8" className="ml-[5px]"><path d="M4 0 V8 M0 4 H8" stroke="#555" /></svg>
        <span className="ml-[14px] text-[12.5px] text-[#555]">100%</span>
      </div>
    </div>
  );
}
